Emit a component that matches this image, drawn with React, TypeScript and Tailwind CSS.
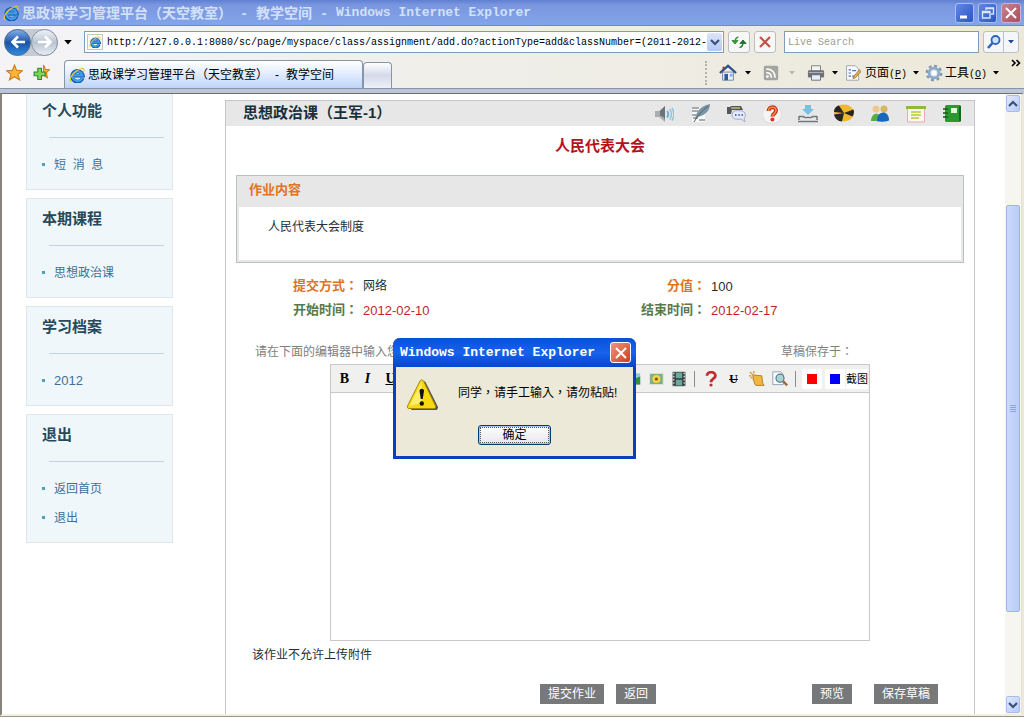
import React, { useState } from 'react';

interface IconProps {
  children: React.ReactNode;
  className?: string;
  box?: string;
}

const Icon: React.FC<IconProps> = ({ children, className = 'w-5 h-5', box = '0 0 20 20' }) => (
  <svg viewBox={box} className={`${className} shrink-0`} fill="none" aria-hidden="true">
    {children}
  </svg>
);

const IeLogo: React.FC<{ className?: string }> = ({ className = 'w-4 h-4' }) => (
  <Icon box="0 0 16 16" className={className}>
    <path d="M13.6 11A5.3 5.3 0 1 1 13.8 8.6H5" stroke="#1557a8" strokeWidth="3.8" />
    <path d="M13.2 10.8A4.9 4.9 0 1 1 13.4 8.4H5" stroke="#3fa0ea" strokeWidth="2.2" />
    <path d="M2 14.8C-.4 13.500 2.500 7.500 7 4.200 11 1.200 15.200.2 15 3.400c0 .6-.2 1.200-.5 1.800" stroke="#f0c23c" strokeWidth="1.2" />
  </Icon>
);

const Caret: React.FC<{ className?: string }> = ({ className = 'text-black' }) => (
  <Icon box="0 0 6 4" className={`w-1.5 h-1 ${className}`}>
    <path d="M0 0h6L3 3.6z" fill="currentColor" />
  </Icon>
);

const Chevron: React.FC<{ up?: boolean }> = ({ up }) => (
  <Icon box="0 0 10 8" className="w-2.5 h-2">
    <path d={up ? 'M1 6l4-4 4 4' : 'M1 2l4 4 4-4'} stroke="#3b5179" strokeWidth="2.2" />
  </Icon>
);

const courseTools = [
  {
    name: '公告',
    icon: (
      <>
        <path d="M1 7h4l6-5v16l-6-5H1z" fill="#a9aeb2" />
        <path d="M6 7l5-5v16c0-4-2-6-5-6z" fill="#6d7478" />
        <path d="M13 7c1.600 2 1.600 4.500 0 6.500" stroke="#6bb2dc" strokeWidth="2" />
        <path d="M15.500 5c2.600 3 2.600 7.500 0 10.500M18 4c2.500 4 2.500 8.500 0 12.500" stroke="#8cc8e6" strokeWidth="1.600" />
      </>
    ),
  },
  {
    name: '作业',
    icon: (
      <>
        <path d="M2 3h13v15H2z" fill="#f8f8f8" />
        <path d="M2 4h7M2 7h6M2 11h5M3 14h5M9 16h6" stroke="#555b60" />
        <path d="M5 16C6 8 10 2 20 0c0 6-4 11-12 13z" fill="#7b95a5" />
        <path d="M4 18C8 11 12 7 18 2" stroke="#4d6472" />
      </>
    ),
  },
  {
    name: '讨论',
    icon: (
      <>
        <path d="M1 3h3l1-1h10l2 4H6l-1 4H1z" fill="#55565a" />
        <path d="M5 4h9" stroke="#c9b770" strokeWidth="1.5" />
        <path d="M7 8c2-2 10-2 12 1 1 3 0 5-1 5l1 4-4-3c-6 1-9-1-9-4z" fill="#e6ebfa" stroke="#a6adc0" />
        <path d="M9 11h1.5M12.3 11h1.5M15.5 11H17" stroke="#5673bb" strokeWidth="2" />
      </>
    ),
  },
  {
    name: '答疑',
    icon: (
      <>
        <circle cx="10" cy="10" r="9.5" fill="#f4f4f4" stroke="#ddd" />
        <path d="M6.500 7c0-5 7.500-5 7.500-.5 0 3-3.500 3-3.500 6" stroke="#c8301c" strokeWidth="4" />
        <path d="M6.500 7c0-5 7.500-5 7.500-.5 0 3-3.500 3-3.500 6" stroke="#f58a3a" strokeWidth="1.600" />
        <circle cx="10.400" cy="15.500" r="2" fill="#d03a20" />
      </>
    ),
  },
  {
    name: '下载',
    icon: (
      <>
        <path d="M7 1h6v4h3l-6 6-6-6h3z" fill="#79bfe2" />
        <path d="M1 12v4M19 12v4M1 12.5h4l2 1h6l2-1h4M0 17.5h20" stroke="#70787f" strokeWidth="1.5" />
      </>
    ),
  },
  {
    name: '资源',
    icon: (
      <>
        <ellipse cx="10" cy="9" rx="10" ry="8.5" fill="#f1b72e" />
        <path d="M10 9L0 8C0 5 2 2 5 1.500zM10 9l9.500-3.500c1 3 0 5-1 7zM10 9l-2 8.500c-4 0-7-3-8-7z" fill="#252525" />
      </>
    ),
  },
  {
    name: '成员',
    icon: (
      <>
        <circle cx="6" cy="5" r="3.5" fill="#efc98c" />
        <circle cx="14" cy="5" r="3.5" fill="#d9b55e" />
        <path d="M1 17c0-9 10-10 10-1v1z" fill="#58ae42" />
        <path d="M7 17c0-11 12-11 12-1 0 2-12 2-12 1z" fill="#1767be" />
      </>
    ),
  },
  {
    name: '日程',
    icon: (
      <>
        <path d="M1.5 3v15h17V3" fill="#fbf6f3" stroke="#eba9b0" />
        <path d="M0 2h20v3H0z" fill="#8cbd35" />
        <path d="M5 8h10M5 11h10M5 14h8" stroke="#c4d95c" strokeWidth="2" />
      </>
    ),
  },
  {
    name: '笔记',
    icon: (
      <>
        <rect x="3" y="1" width="16" height="17" rx="1.5" fill="#2a9a30" />
        <path d="M18 2v15" stroke="#136919" strokeWidth="2" />
        <path d="M9 4h6v5H9z" fill="#e6f3df" />
        <path d="M1 5h5M1 9h5M1 13h5" stroke="#165c19" strokeWidth="1.5" />
      </>
    ),
  },
];

const menus = [
  { title: '个人功能', items: ['短\u00a0 消\u00a0 息'] },
  { title: '本期课程', items: ['思想政治课'] },
  { title: '学习档案', items: ['2012'] },
  { title: '退出', items: ['返回首页', '退出'] },
];

const TitleBar = () => (
  <header className="flex h-[26px] shrink-0 items-center bg-linear-to-b from-[#5f80d2] via-[#7a96df] via-20% to-[#83a5ea] border-b border-[#7186c2] px-[3px] text-[#d3e0f9]">
    <IeLogo />
    <h1 className="ml-[3px] flex flex-1 items-center gap-2 whitespace-nowrap text-[14px] font-bold leading-5">
      <span>思政课学习管理平台（天空教室）</span>
      <span className="w-2 text-center">-</span>
      <span>教学空间</span>
      <span className="w-2 text-center">-</span>
      <span className="font-['Liberation_Mono',monospace] text-[13px]">Windows Internet Explorer</span>
    </h1>
    <div className="flex gap-1">
      <button aria-label="最小化" className="flex h-5 w-[19px] items-center justify-center rounded-[3px] border border-[#a9bdf0] bg-linear-to-br from-[#6288e4] to-[#2a55c4]">
        <Icon box="0 0 16 16" className="w-4 h-4"><path d="M3 12h7" stroke="#fff" strokeWidth="3" /></Icon>
      </button>
      <button aria-label="还原" className="flex h-5 w-[19px] items-center justify-center rounded-[3px] border border-[#a9bdf0] bg-linear-to-br from-[#6288e4] to-[#2a55c4]">
        <Icon box="0 0 16 16" className="w-4 h-4">
          <path d="M6 5V3h7.5v6H11M6 3.5h7.5M2.5 6.5H10v6.5H2.5zM2.5 7.5H10" stroke="#dce6fb" strokeWidth="1.4" />
        </Icon>
      </button>
      <button aria-label="关闭" className="flex h-5 w-5 items-center justify-center rounded-[3px] border border-[#c7b3d8] bg-linear-to-br from-[#c98290] to-[#a84e5c]">
        <Icon box="0 0 16 16" className="w-4 h-4"><path d="M3 3l10 10M13 3L3 13" stroke="#fff" strokeWidth="2" /></Icon>
      </button>
    </div>
  </header>
);

const AddressBar = () => {
  const [url, setUrl] = useState(
    'http://127.0.0.1:8080/sc/page/myspace/class/assignment/add.do?actionType=add&classNumber=(2011-2012-'
  );

  return (
    <div className="flex h-8 shrink-0 items-center pl-1 pr-[5px]">
      <div className="flex items-center rounded-full bg-[#c5cad3]">
        <button aria-label="后退" className="flex h-[27px] w-[27px] items-center justify-center rounded-full border border-[#51698f] bg-linear-to-b from-[#7faee8] via-[#1c54a8] to-[#2f8ae0]">
          <Icon box="0 0 16 16" className="w-4 h-4"><path d="M15 8H3M8 2.5L2.5 8 8 13.5" stroke="#fff" strokeWidth="2.6" /></Icon>
        </button>
        <button aria-label="前进" className="flex h-[27px] w-[27px] items-center justify-center rounded-full border border-[#8b939f] bg-linear-to-b from-[#f0f3f8] via-[#b9c4d2] to-[#e8eef5]">
          <Icon box="0 0 16 16" className="w-4 h-4"><path d="M1 8h12M8 2.5L13.5 8 8 13.5" stroke="#fff" strokeWidth="2.6" /></Icon>
        </button>
      </div>
      <button aria-label="最近浏览的网页" className="ml-1.5 w-2">
        <Icon box="0 0 6 4" className="w-2 h-[5px]"><path d="M0 0h6L3 3.6z" fill="#000" /></Icon>
      </button>
      <div className="ml-3 flex h-[22px] flex-1 items-center border border-[#7f9db9] bg-white pl-[2px] pr-px">
        <span className="flex h-4 w-4 shrink-0 items-center justify-center border border-[#c3c8c0] bg-[#fbfaf0]">
          <IeLogo className="w-3 h-3" />
        </span>
        <input
          aria-label="地址"
          value={url}
          onChange={(e) => setUrl(e.target.value)}
          className="ml-1 min-w-0 flex-1 bg-transparent pt-0.5 font-['Liberation_Mono',monospace] text-[10px] leading-4 text-black outline-none"
        />
        <button aria-label="显示地址列表" className="flex h-[18px] w-[15px] items-center justify-center rounded-[2px] bg-linear-to-b from-[#dce6fc] to-[#b4c8f6]">
          <Chevron />
        </button>
      </div>
      <button aria-label="刷新" className="ml-1 flex h-[22px] w-[22px] items-center justify-center rounded-[3px] border border-[#b9bec6] bg-[#f7f7f5]">
        <Icon box="0 0 16 16" className="w-4 h-4">
          <path d="M7.5 3C4.500 3 4 5 4 7M1 6.500h6L4 10z" stroke="#3b9440" fill="#3b9440" />
          <path d="M8.500 13.500c3 0 3.500-2 3.500-4M9 9.500h6L12 6z" stroke="#23772b" fill="#23772b" />
        </Icon>
      </button>
      <button aria-label="停止" className="ml-1 flex h-[22px] w-[22px] items-center justify-center rounded-[3px] border border-[#b9bec6] bg-[#f7f7f5]">
        <Icon box="0 0 16 16" className="w-4 h-4"><path d="M3 3l10 10M13 3L3 13" stroke="#c0504a" strokeWidth="2.2" /></Icon>
      </button>
      <input
        type="search"
        aria-label="搜索"
        placeholder="Live Search"
        className="ml-2 h-[22px] w-[195px] border border-[#7f9db9] bg-white px-[3px] font-['Liberation_Mono',monospace] text-[10px] placeholder:text-[#9b9b95] outline-none"
      />
      <div className="ml-1 flex h-[22px] rounded-[3px] border border-[#b4c0d4] bg-[#f4f6f8]">
        <button aria-label="开始搜索" className="flex w-5 items-center justify-center border-r border-[#b4c0d4]">
          <Icon box="0 0 16 16" className="w-4 h-4">
            <circle cx="9.5" cy="6" r="4" fill="#cfe4fa" stroke="#2d62c0" strokeWidth="1.8" />
            <path d="M6.5 9L2 14" stroke="#2d62c0" strokeWidth="2.6" />
          </Icon>
        </button>
        <button aria-label="搜索选项" className="flex w-3.5 items-center justify-center">
          <Caret className="text-[#1d4b94]" />
        </button>
      </div>
    </div>
  );
};

const CommandBar = () => (
  <div className="flex h-[31px] shrink-0 items-end border-b border-[#8795a9]">
    <div className="flex h-[31px] items-center gap-2.5 pl-[6px]">
      <button aria-label="收藏中心">
        <Icon box="0 0 16 16" className="w-[17px] h-[17px]"><path d="M8 1l2 5 5.5.3-4.2 3.5L12.800 15 8 12l-4.800 3 1.500-5.200L.5 6.300 6 6z" fill="#f9b43a" stroke="#cd7d18" /></Icon>
      </button>
      <button aria-label="添加到收藏夹">
        <Icon box="0 0 16 16" className="w-[17px] h-[17px]">
          <path d="M10 1l1.6 4 4 .3-3 2.8 1 5-3.6-2.5z" fill="#f8b53b" stroke="#cd7d18" />
          <path d="M4.500 4h3.500v3.500h3.500V11H8v3.500H4.500V11H1V7.500h3.500z" fill="#7dd45c" stroke="#2c8a28" />
        </Icon>
      </button>
    </div>
    <div className="ml-3.5 flex h-[28px] w-[299px] items-center rounded-t-[4px] border border-b-0 border-[#8795a9] bg-linear-to-b from-white via-[#e0ecfd] to-[#bdd4fa] pl-1 whitespace-nowrap text-[12px] text-black">
      <IeLogo />
      <span className="ml-[3px]">思政课学习管理平台（天空教室）</span>
      <span className="w-[18px] text-center">-</span>
      <span>教学空间</span>
    </div>
    <button aria-label="新选项卡" className="h-[26px] w-[29px] rounded-t-[4px] border border-b-0 border-[#8795a9] bg-linear-to-b from-white via-[#d5d9ea] to-[#eef0f9]" />
    <div className="ml-auto flex h-[30px] items-center text-[12px] text-black">
      <span className="h-6 w-0 border-l-2 border-dotted border-[#b5b2a6]" />
      <button aria-label="主页" className="ml-3">
        <Icon className="w-[18px] h-[18px]">
          <path d="M4 9h12v9H4z" fill="#eef3fa" stroke="#6a7fa3" />
          <path d="M1 10l9-8 9 8" stroke="#2f4f8e" strokeWidth="2.5" />
          <path d="M5 3v4" stroke="#853c34" strokeWidth="2" />
          <path d="M6 11h4v7H6z" fill="#285ca5" />
          <path d="M12 11h3v3h-3z" fill="#7cabe0" />
        </Icon>
      </button>
      <span className="ml-2"><Caret /></span>
      <button aria-label="源" className="ml-3">
        <Icon className="w-4 h-4">
          <rect x="1" y="1" width="18" height="18" rx="2" fill="#a4a4a0" />
          <path d="M4 5c7 0 11 4 11 11M4 9.5c4 0 6.5 2.5 6.5 6.5" stroke="#fff" strokeWidth="2" />
          <circle cx="5.5" cy="14.5" r="1.8" fill="#fff" />
        </Icon>
      </button>
      <span className="ml-2.5"><Caret className="text-[#b9b6aa]" /></span>
      <button aria-label="打印" className="ml-3">
        <Icon className="w-[18px] h-[18px]">
          <path d="M5 2h10v6H5z" fill="#f4f4f4" stroke="#777" />
          <rect x="1" y="7" width="18" height="8" rx="1.5" fill="#6d7277" />
          <path d="M2 9.5h16" stroke="#b8bdc2" />
          <path d="M5 12h10v6H5z" fill="#e9f1f8" stroke="#667" />
        </Icon>
      </button>
      <span className="ml-[7px]"><Caret /></span>
      <button className="ml-[7px] flex items-center gap-1">
        <Icon className="w-4 h-[18px]">
          <path d="M2 1h11l4 4v14H2z" fill="#fbfbff" stroke="#8a93a8" />
          <path d="M4.500 6h3M4.500 10h3M4.500 14h3M9 7h5M9 14h4" stroke="#4f6fae" strokeWidth="1.500" />
          <path d="M18 6l-7 8-1 3 3-1 7-8z" fill="#e5b34c" stroke="#94692a" />
        </Icon>
        <span>页面<span className="font-['Liberation_Mono',monospace] text-[10px]">(<u>P</u>)</span></span>
      </button>
      <span className="ml-1.5"><Caret /></span>
      <button className="ml-[6px] flex items-center gap-0.5">
        <Icon className="w-[18px] h-[18px]">
          <circle cx="10" cy="10" r="8" stroke="#7e97b4" strokeWidth="2.5" strokeDasharray="3.2 3.08" />
          <circle cx="10" cy="10" r="5.5" fill="#dfe9f4" stroke="#8fa9c6" strokeWidth="3" />
          <circle cx="10" cy="10" r="2.5" fill="#fff" />
        </Icon>
        <span>工具<span className="font-['Liberation_Mono',monospace] text-[10px]">(<u>O</u>)</span></span>
      </button>
      <span className="ml-1.5"><Caret /></span>
      <button aria-label="更多" className="ml-3 mr-[3px] self-start">
        <Icon box="0 0 10 10" className="w-2.5 h-2.5"><path d="M1 2l3 3-3 3M5.5 2l3 3-3 3" stroke="#000" strokeWidth="1.6" /></Icon>
      </button>
    </div>
  </div>
);

const Sidebar = () => (
  <nav className="-mt-1 ml-6 flex w-[147px] shrink-0 flex-col gap-2">
    {menus.map((menu) => (
      <section key={menu.title} className="border border-[#dfe6e9] bg-[#eff7fb] pt-[10px] pb-[10px]">
        <h2 className="ml-[15px] text-[15px] font-bold leading-5 text-[#27495a]">{menu.title}</h2>
        <hr className="mt-4 mr-2 mb-3 ml-[22px] border-[#c3d3e0]" />
        <ul>
          {menu.items.map((item) => (
            <li key={item} className="flex h-[29px] items-center pl-[15px]">
              <span className="h-[3px] w-[3px] bg-[#4fa0b4]" />
              <a href="#" className={`ml-[9px] text-[#3d6f98] ${item === '2012' ? 'text-[13px]' : 'text-[12px]'}`}>{item}</a>
            </li>
          ))}
        </ul>
      </section>
    ))}
  </nav>
);

// full-width punctuation sits in the middle of its cell in the TC face
const centredPunctuation = "font-['Liberation_Sans','Noto_Sans_CJK_TC',sans-serif]";

const Field: React.FC<{ label: string; value: string; tone: string; valueTone: string; width: string }> = ({
  label,
  value,
  tone,
  valueTone,
  width,
}) => (
  <div className="flex flex-1 items-center">
    <dt className={`${width} ${centredPunctuation} text-right text-[13px] font-bold ${tone}`}>{label}</dt>
    <dd className={`ml-[5px] ${valueTone}`}>{value}</dd>
  </div>
);

const toolCell = 'flex h-[23px] w-[23px] items-center justify-center';

const Editor = () => (
  <div className="mx-auto flex h-[277px] w-[540px] flex-col border border-[#c8c8c8] bg-white">
    <div className="flex h-7 shrink-0 items-center border-b border-[#c8c8c8] bg-[#f0f0ee] pl-0.5 font-['Liberation_Serif',serif] text-[14px] font-bold text-black">
      <button className={toolCell} aria-label="粗体">B</button>
      <button className={`${toolCell} italic`} aria-label="斜体">I</button>
      <button className={`${toolCell} underline`} aria-label="下划线">U</button>
      <div className="ml-auto flex items-center">
        <button className={toolCell} aria-label="图片">
          <Icon className="w-4 h-4"><path d="M1 3h18v14H1z" fill="#8dc7e8" /><path d="M1 17V9l6-5 4 6 8-3v10z" fill="#3a8c38" /></Icon>
        </button>
        <button className={toolCell} aria-label="插图">
          <Icon className="w-4 h-4">
            <path d="M2 3h17v14H2z" fill="#7daf8c" stroke="#e8e8e0" />
            <circle cx="10.5" cy="10" r="5" fill="#f5d442" />
            <circle cx="10.5" cy="10" r="2" fill="#8c4c1b" />
          </Icon>
        </button>
        <button className={toolCell} aria-label="视频">
          <Icon className="w-4 h-4">
            <path d="M2 1h16v18H2z" fill="#343b3e" />
            <path d="M6 2h8v7H6zM6 11h8v7H6z" fill="#6ba89b" />
            <path d="M3.5 2v17M16.5 2v17" stroke="#eee" strokeWidth="1.5" strokeDasharray="2 2" />
          </Icon>
        </button>
        <span className="mx-1 h-4 w-px bg-[#8c8c8c]" />
        <button className={toolCell} aria-label="帮助">
          <Icon className="w-4 h-4">
            <path d="M5 6c0-6 10.5-6 10.5 0C15.5 10 10 9 10 14" stroke="#c22a2f" strokeWidth="3.5" />
            <circle cx="10" cy="17.5" r="2" fill="#c22a2f" />
          </Icon>
        </button>
        <button className={`${toolCell} text-[12px] line-through`} aria-label="删除线">U</button>
        <button className={toolCell} aria-label="清除格式">
          <Icon className="w-4 h-4">
            <path d="M5 5l11 1 1 9 2 3H9c-3-1-2-5-4-8z" fill="#f0b743" stroke="#a6701e" />
            <path d="M1 1l5 5M6 0v3M0 6h3M2 9l2-1" stroke="#d8941d" strokeWidth="1.5" />
          </Icon>
        </button>
        <button className={toolCell} aria-label="预览内容">
          <Icon className="w-4 h-4">
            <path d="M1 1h10l3 3v13H1z" fill="#f8fbff" stroke="#7d8fae" />
            <circle cx="10" cy="9" r="5" fill="#a8d6cc" stroke="#557790" strokeWidth="1.5" />
            <path d="M14 13l5 5" stroke="#9a6b38" strokeWidth="3" />
          </Icon>
        </button>
        <span className="mx-1 h-4 w-px bg-[#8c8c8c]" />
        <button className={toolCell} aria-label="红色">
          <span className="flex h-5 w-5 items-center justify-center bg-white"><span className="h-2.5 w-2.5 bg-[#ff0000]" /></span>
        </button>
        <button className={toolCell} aria-label="蓝色">
          <span className="flex h-5 w-5 items-center justify-center bg-white"><span className="h-2.5 w-2.5 bg-[#0000ff]" /></span>
        </button>
        <button className="h-5 bg-white font-['Liberation_Sans','Noto_Sans_CJK_SC',sans-serif] text-[11px] font-normal leading-5 whitespace-nowrap mr-px">截图</button>
      </div>
    </div>
    <textarea id="answer" className="w-full flex-1 resize-none p-2 text-[12px] outline-none" />
  </div>
);

const Assignment = () => (
  <main className="mt-1.5 mr-[30px] ml-[52px] flex-1 border border-b-0 border-[#c2c6c6] text-[12px] text-[#1c3038]">
    <div className="flex h-[25px] items-center justify-between bg-[#e7e7e7] pr-3 pl-[17px]">
      <h2 className="text-[15px] font-bold text-[#17303a]">思想政治课（王军-1）</h2>
      <div className="flex gap-4">
        {courseTools.map((tool) => (
          <button key={tool.name} aria-label={tool.name} title={tool.name}>
            <Icon>{tool.icon}</Icon>
          </button>
        ))}
      </div>
    </div>
    <h3 className="mt-2.5 text-center text-[15px] font-bold leading-5 text-[#b3141c]">人民代表大会</h3>

    <section className="mx-2.5 mt-[19px] h-[88px] border border-[#b9c0c3] bg-[#e7e7e7] px-0.5 pb-0.5">
      <h4 className="flex h-[31px] items-center pb-[3px] pl-2.5 text-[13px] font-bold text-[#e07420]">作业内容</h4>
      <p className="h-[53px] bg-white pt-2.5 pl-[29px] leading-5">人民代表大会制度</p>
    </section>

    <dl className="mt-[11px] leading-6">
      <div className="flex">
        <Field label="提交方式：" value="网络" tone="text-[#e07420]" valueTone="" width="w-[132px]" />
        <Field label="分值：" value="100" tone="text-[#e07420]" valueTone="pt-0.5 text-[13px] leading-[22px]" width="w-[106px]" />
      </div>
      <div className="flex">
        <Field label="开始时间：" value="2012-02-10" tone="text-[#577a4c]" valueTone="pt-0.5 text-[13px] leading-[22px] text-[#c81e28]" width="w-[132px]" />
        <Field label="结束时间：" value="2012-02-17" tone="text-[#577a4c]" valueTone="pt-0.5 text-[13px] leading-[22px] text-[#c81e28]" width="w-[106px]" />
      </div>
    </dl>

    <div className="mt-5 mb-0.5 flex justify-between pr-[121px] pl-[29px] leading-5 text-[#808080]">
      <label htmlFor="answer">请在下面的编辑器中输入您</label>
      <span className={centredPunctuation}>草稿保存于：</span>
    </div>
    <Editor />
    <p className="mt-1 pl-[26px] leading-5">该作业不允许上传附件</p>

    <div className="mt-[19px] flex pr-9 text-white">
      <button className="ml-auto h-5 bg-[#77787a] px-2">提交作业</button>
      <button className="ml-3 h-5 bg-[#77787a] px-2">返回</button>
      <button className="ml-[156px] h-5 bg-[#77787a] px-2">预览</button>
      <button className="ml-[22px] h-5 bg-[#77787a] px-2">保存草稿</button>
    </div>
  </main>
);

const ScrollBar = () => (
  <div className="flex w-[17px] shrink-0 flex-col border-r border-[#e6e3d6] bg-[#f6f5ef] px-px py-px">
    <button aria-label="向上滚动" className="flex h-[17px] items-center justify-center rounded-[2px] border border-[#a9bdea] bg-linear-to-br from-[#dfe8fd] to-[#b8cbf8]">
      <Chevron up />
    </button>
    <div className="flex-[93]" />
    <div className="flex flex-[407] items-center justify-center rounded-[2px] border border-[#9fb5e6] bg-linear-to-r from-[#cbdafc] to-[#b9ccf9]">
      <div className="flex flex-col gap-px">
        {[0, 1, 2, 3].map((line) => (
          <span key={line} className="h-px w-1.5 bg-[#8ba4dc]" />
        ))}
      </div>
    </div>
    <div className="flex-[84]" />
    <button aria-label="向下滚动" className="flex h-[17px] items-center justify-center rounded-[2px] border border-[#a9bdea] bg-linear-to-br from-[#dfe8fd] to-[#b8cbf8]">
      <Chevron />
    </button>
  </div>
);

const AlertDialog: React.FC<{ onClose: () => void }> = ({ onClose }) => (
  <div
    role="alertdialog"
    aria-labelledby="alert-title"
    aria-describedby="alert-text"
    className="absolute top-[338px] left-[393px] w-[243px] rounded-t-[7px] border-[3px] border-t-0 border-[#0a3fc0] bg-[#ece9d8] text-[12px] text-black"
  >
    <div className="-mx-[3px] flex h-[29px] items-center justify-between rounded-t-[7px] bg-linear-to-b from-[#0a50d8] via-[#1762ee] to-[#0646c8] pr-[5px] pl-[7px]">
      <h2 id="alert-title" className="font-['Liberation_Mono',monospace] text-[13px] font-bold text-white">Windows Internet Explorer</h2>
      <button aria-label="关闭" onClick={onClose} className="flex h-[21px] w-[21px] items-center justify-center rounded-[3px] border border-white bg-linear-to-br from-[#ee9478] to-[#cc3c18]">
        <Icon box="0 0 16 16" className="w-4 h-4"><path d="M3 3l10 10M13 3L3 13" stroke="#fff" strokeWidth="2" /></Icon>
      </button>
    </div>
    <div className="flex items-start pt-3 pl-2.5">
      <Icon box="0 0 32 32" className="w-8 h-8">
        <path d="M17 3c1-1 2-1 3 1l12 24c0 2-1 3-2 3H5z" fill="#55534a" />
        <path d="M14 2c1-1.5 2.5-1.5 3.5 0l12 25c.5 1.5 0 2.5-1.5 2.5H3C1.500 29.500 1 28.500 1.500 27z" fill="#f7d911" stroke="#a98b08" />
        <path d="M15.500 3l-12 24 12-3z" fill="#fbee6c" />
        <path d="M13.500 12c0-3 4.500-3 4.500 0l-1.300 8h-1.900z" fill="#111" />
        <circle cx="15.800" cy="24.500" r="2.200" fill="#111" />
      </Icon>
      <p id="alert-text" className={`ml-5 pt-1 whitespace-nowrap leading-5 ${centredPunctuation}`}>同学，请手工输入，请勿粘贴!</p>
    </div>
    <button onClick={onClose} className="mx-auto mt-3.5 mb-[11px] block h-5 w-[73px] rounded-[3px] border border-[#003c74] bg-linear-to-b from-white to-[#e6e6ee] p-px shadow-[inset_0_0_0_1px_#a9c3f0] leading-4">
      <span className="block border border-dotted border-[#555] leading-[14px]">确定</span>
    </button>
  </div>
);

export default function App() {
  const [alertOpen, setAlertOpen] = useState(true);

  return (
    <div className="relative flex h-screen flex-col overflow-hidden border-b border-[#9a9484] bg-[#ece9d8] font-['Liberation_Sans','Noto_Sans_CJK_SC',sans-serif]">
      <TitleBar />
      <div className="shrink-0 bg-linear-to-r from-[#f4f4f7] via-[#efeee8] to-[#ece9d8]">
        <AddressBar />
        <CommandBar />
      </div>
      <div className="h-1 shrink-0 bg-[#bcc6da]" />
      <div className="flex min-h-0 flex-1 overflow-hidden border-t border-r-2 border-b-2 border-l-2 border-t-[#716f64] border-r-[#ece9d8] border-b-[#f1efe4] border-l-[#88847c] bg-white">
        <Sidebar />
        <Assignment />
        <ScrollBar />
      </div>
      {alertOpen && <AlertDialog onClose={() => setAlertOpen(false)} />}
    </div>
  );
}
